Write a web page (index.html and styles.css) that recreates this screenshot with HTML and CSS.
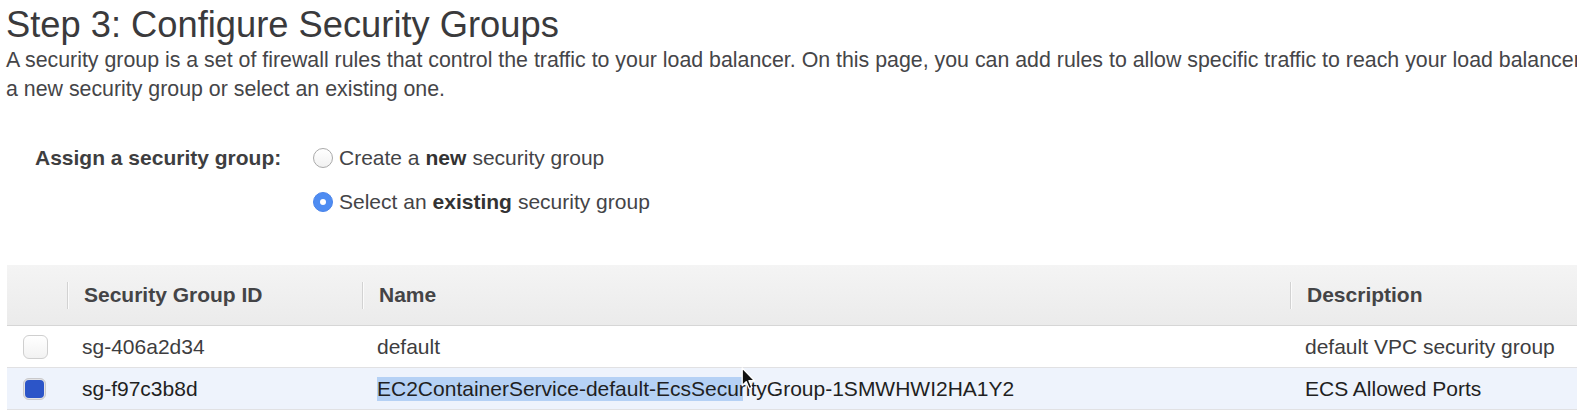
FILE: index.html
```html
<!DOCTYPE html>
<html lang="en">
<head>
<meta charset="utf-8">
<title>Step 3: Configure Security Groups</title>
<link rel="stylesheet" href="styles.css">
</head>
<body>
<div class="page">
  <h1 class="title">Step 3: Configure Security Groups</h1>
  <p class="intro">A security group is a set of firewall rules that control the traffic to your load balancer. On this page, you can add rules to allow specific traffic to reach your load balancer. First, decide whether to create<br>a new security group or select an existing one.</p>

  <div class="assign">
    <div class="assign-label">Assign a security group:</div>
    <div class="options">
      <label class="option"><span class="radio"></span>Create a <b>new</b> security group</label>
      <label class="option"><span class="radio checked"></span>Select an <b>existing</b> security group</label>
    </div>
  </div>

  <div class="table">
    <div class="row head">
      <div class="cell check-cell"></div>
      <div class="cell hcell">Security Group ID</div>
      <div class="cell hcell">Name</div>
      <div class="cell hcell">Description</div>
    </div>
    <div class="row">
      <div class="cell check-cell"><span class="checkbox"></span></div>
      <div class="cell">sg-406a2d34</div>
      <div class="cell">default</div>
      <div class="cell">default VPC security group</div>
    </div>
    <div class="row selected">
      <div class="cell check-cell"><span class="checkbox checked"></span></div>
      <div class="cell">sg-f97c3b8d</div>
      <div class="cell"><span class="sel">EC2ContainerService-default-EcsSecu</span>rityGroup-1SMWHWI2HA1Y2</div>
      <div class="cell">ECS Allowed Ports</div>
    </div>
  </div>
</div>
<svg class="cursor" width="15" height="24" viewBox="0 0 15 24" aria-hidden="true">
  <path d="M1.2 1 L1.2 18.5 L5.2 14.6 L8.2 21.6 L10.9 20.4 L8 13.7 L13.6 13.7 Z" fill="#111" stroke="#fff" stroke-width="1.3" stroke-linejoin="round"/>
</svg>
</body>
</html>
```

FILE: styles.css
```css
html, body {
  margin: 0;
  padding: 0;
  background: #ffffff;
  overflow: hidden;
}

body {
  font-family: "Liberation Sans", Arial, Helvetica, sans-serif;
  color: #444444;
  width: 1577px;
  height: 415px;
  position: relative;
}

.page {
  padding: 5px 0 0 6px;
  width: 2000px;
}

.title {
  margin: 0;
  font-size: 36.3px;
  line-height: 40px;
  font-weight: normal;
  color: #3a3a3c;
}

.intro {
  margin: 1px 0 0 0;
  font-size: 21.35px;
  line-height: 29px;
  white-space: nowrap;
  color: #454548;
}

.assign {
  display: flex;
  margin-top: 40px;
  padding-left: 29px;
  font-size: 21px;
}

.assign-label {
  width: 278px;
  font-weight: bold;
  line-height: 28px;
  color: #3e3e40;
}

.options {
  display: flex;
  flex-direction: column;
  gap: 16px;
}

.option {
  display: flex;
  align-items: center;
  line-height: 28px;
  color: #444447;
}

.option b {
  color: #333;
  margin: 0 6px;
}

.radio {
  width: 18px;
  height: 18px;
  border: 1px solid #a9a9a9;
  border-radius: 50%;
  background: linear-gradient(#ffffff, #f1f1f1);
  margin-right: 6px;
  flex: none;
  display: flex;
  align-items: center;
  justify-content: center;
}

.radio.checked {
  border-color: #4a84ea;
  background: #4e8cf2;
}

.radio.checked::after {
  content: "";
  width: 6px;
  height: 6px;
  border-radius: 50%;
  background: #ffffff;
}

.table {
  margin-top: 49px;
  margin-left: 1px;
  width: 1800px;
  font-size: 21px;
}

.row {
  display: grid;
  grid-template-columns: 60px 295px 928px 1fr;
  height: 41px;
  border-bottom: 1px solid #e1e1e3;
  align-items: center;
  color: #3d3d40;
}

.row.head {
  height: 60px;
  background: linear-gradient(#f4f4f4, #ebebeb);
  border-bottom: 1px solid #d6d6d6;
  font-weight: bold;
  color: #444446;
}

.row.selected {
  background: #eef3fc;
  color: #1f1f22;
}

.cell {
  padding-left: 15px;
  white-space: nowrap;
  display: flex;
  align-items: center;
}

.hcell {
  padding-left: 0;
}

.hcell::before {
  content: "";
  width: 1px;
  height: 27px;
  background: #d2d2d2;
  box-shadow: 1px 0 0 #fbfbfb;
  margin-right: 16px;
}

.check-cell {
  padding-left: 16px;
}

.checkbox {
  width: 23px;
  height: 22px;
  border: 1px solid #cfcfcf;
  border-radius: 6px;
  background: linear-gradient(#ffffff, #f2f2f2);
  box-sizing: content-box;
}

.checkbox.checked {
  width: 19px;
  height: 18px;
  border: 2px solid #e4e4e6;
  outline: 1px solid #c9c9cc;
  outline-offset: -1px;
  background: #2c55c8;
  border-radius: 6px;
}

.sel {
  background: #b5d1f5;
  padding-right: 4px;
  margin-right: -4px;
}

.cursor {
  position: absolute;
  left: 741px;
  top: 367px;
}
```
